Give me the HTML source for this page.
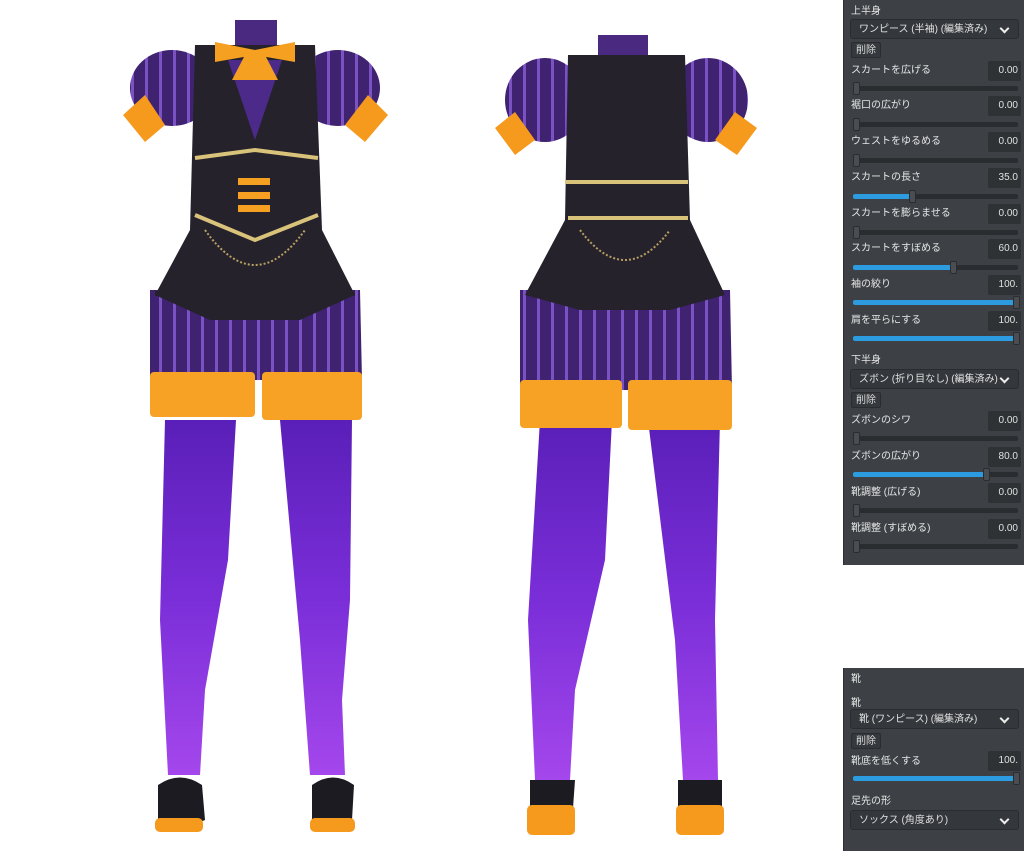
<!DOCTYPE html>
<html><head><meta charset="utf-8"><style>
body{margin:0;width:1024px;height:851px;background:#fff;position:relative;overflow:hidden;font-family:"Liberation Sans","Noto Sans CJK JP",sans-serif}
.p{position:absolute;left:843px;width:181px;background:#3d4145;border-left:1px solid #2c2f32}
.l{position:absolute;left:7px;font-size:10px;color:#e6e6e6;line-height:12px}
.dd{position:absolute;left:6px;width:169px;height:20px;background:#34373b;border:1px solid #2a2c2f;border-radius:3px;color:#e0e0e0;font-size:10px;line-height:20px;box-sizing:border-box;padding-left:8px}
.dd:after{content:"";position:absolute;right:10px;top:5px;width:5px;height:5px;border-right:2px solid #eee;border-bottom:2px solid #eee;transform:rotate(45deg)}
.b{position:absolute;left:7px;width:30px;height:16px;background:#35383c;border:1px solid #2a2c2f;border-radius:2px;color:#ddd;font-size:10px;line-height:16px;text-align:center;box-sizing:border-box}
.v{position:absolute;right:4px;width:33px;height:20px;background:#2f3235;border-radius:2px;color:#e0e0e0;font-size:10px;line-height:20px;text-align:right;padding-right:3px;box-sizing:border-box}
.t{position:absolute;left:9px;width:165px;height:5px;background:#2a2d30;border-radius:2px}
.f{position:absolute;left:0;top:0;height:5px;background:#2d9be0;border-radius:2px}
.k{position:absolute;top:-4px;width:7px;height:13px;background:#4a4e52;border:1px solid #2a2c2f;box-sizing:border-box;border-radius:2px}
</style></head><body>
<svg width="843" height="851" style="position:absolute;left:0;top:0">
<defs>
<linearGradient id="leg" x1="0" y1="0" x2="0" y2="1"><stop offset="0" stop-color="#5a1fb8"/><stop offset=".5" stop-color="#7a2ed8"/><stop offset="1" stop-color="#a447ec"/></linearGradient>
<pattern id="st" width="14" height="10" patternUnits="userSpaceOnUse"><rect width="14" height="10" fill="#3f2270"/><rect x="5" width="3" height="10" fill="#7a52c4"/></pattern>
</defs>
<!-- FRONT -->
<g>
<path d="M165 420 L236 420 L228 560 L205 690 L200 775 L168 775 L160 620 Z" fill="url(#leg)"/>
<path d="M280 420 L352 420 L350 600 L342 700 L345 775 L310 775 L300 640 Z" fill="url(#leg)"/>
<path d="M158 785 Q180 770 202 785 L205 820 Q180 832 158 822 Z" fill="#1c1b22"/><rect x="155" y="818" width="48" height="14" rx="5" fill="#f59a1d"/>
<path d="M312 785 Q333 770 354 785 L352 820 Q333 832 312 822 Z" fill="#1c1b22"/><rect x="310" y="818" width="45" height="14" rx="5" fill="#f59a1d"/>
<path d="M150 290 L360 290 L362 380 L150 380 Z" fill="url(#st)"/>
<rect x="150" y="372" width="105" height="45" rx="4" fill="#f7a125"/><rect x="262" y="372" width="100" height="48" rx="4" fill="#f7a125"/>
<ellipse cx="172" cy="88" rx="42" ry="38" fill="url(#st)"/><ellipse cx="338" cy="88" rx="42" ry="38" fill="url(#st)"/>
<path d="M123 115 L145 95 L165 125 L145 142 Z" fill="#f59a1d"/><path d="M345 125 L368 95 L388 115 L365 142 Z" fill="#f59a1d"/>
<rect x="235" y="20" width="42" height="30" fill="#4a2a80"/>
<path d="M195 45 L315 45 L322 230 L355 295 L300 320 L210 320 L155 295 L190 230 Z" fill="#25222c"/>
<path d="M155 290 Q170 305 185 295 Q200 315 215 303 Q230 322 255 310 Q280 322 295 303 Q310 315 325 295 Q340 305 355 290 L355 296 L155 296 Z" fill="#25222c"/>
<path d="M228 60 L255 140 L282 60 Z" fill="#4c2a8a"/>
<path d="M195 158 L255 150 L318 158 M195 215 L255 240 L318 215" stroke="#d9c37a" stroke-width="4" fill="none"/>
<path d="M205 230 Q255 300 305 230" stroke="#b8a060" stroke-width="2" stroke-dasharray="2 2" fill="none"/>
<rect x="238" y="178" width="32" height="7" fill="#f5a020"/><rect x="238" y="192" width="32" height="7" fill="#f5a020"/><rect x="238" y="205" width="32" height="7" fill="#f5a020"/>
<path d="M215 42 L255 50 L295 42 L295 62 L255 55 L215 62 Z" fill="#f5a020"/>
<path d="M245 55 L232 80 L278 80 L265 55 Z" fill="#f5a020"/>
</g>
<!-- BACK -->
<g>
<path d="M540 420 L612 420 L605 560 L575 690 L570 780 L535 780 L528 620 Z" fill="url(#leg)"/>
<path d="M648 420 L720 420 L715 620 L718 780 L683 780 L675 640 Z" fill="url(#leg)"/>
<path d="M530 780 L575 780 L573 808 L530 808 Z" fill="#1c1b22"/><rect x="527" y="805" width="48" height="30" rx="5" fill="#f59a1d"/>
<path d="M678 780 L722 780 L722 808 L678 808 Z" fill="#1c1b22"/><rect x="676" y="805" width="48" height="30" rx="5" fill="#f59a1d"/>
<path d="M520 290 L730 290 L732 390 L520 390 Z" fill="url(#st)"/>
<rect x="520" y="380" width="102" height="48" rx="4" fill="#f7a125"/><rect x="628" y="380" width="104" height="50" rx="4" fill="#f7a125"/>
<ellipse cx="545" cy="100" rx="40" ry="42" fill="url(#st)"/><ellipse cx="708" cy="100" rx="40" ry="42" fill="url(#st)"/>
<path d="M495 128 L515 112 L535 140 L515 155 Z" fill="#f59a1d"/><path d="M715 140 L735 112 L757 128 L737 155 Z" fill="#f59a1d"/>
<rect x="598" y="35" width="50" height="25" fill="#4a2a80"/>
<path d="M568 55 L685 55 L690 220 L725 295 L670 310 L580 310 L525 295 L565 220 Z" fill="#25222c"/>
<path d="M565 182 L688 182 M568 218 L688 218" stroke="#d9c37a" stroke-width="4"/>
<path d="M580 230 Q625 290 670 230" stroke="#b8a060" stroke-width="2" stroke-dasharray="2 2" fill="none"/>
</g>
</svg>
<div class="p" style="top:0;height:565px">
<div class="l" style="top:6px">上半身</div>
<div class="dd" style="top:19px">ワンピース (半袖) (編集済み)</div>
<div class="b" style="top:42px">削除</div>
<div class="l" style="top:65px">スカートを広げる</div><div class="v" style="top:61px">0.00</div><div class="t" style="top:86px"><div class="k" style="left:0"></div></div>
<div class="l" style="top:100px">裾口の広がり</div><div class="v" style="top:96px">0.00</div><div class="t" style="top:122px"><div class="k" style="left:0"></div></div>
<div class="l" style="top:136px">ウェストをゆるめる</div><div class="v" style="top:132px">0.00</div><div class="t" style="top:158px"><div class="k" style="left:0"></div></div>
<div class="l" style="top:172px">スカートの長さ</div><div class="v" style="top:168px">35.0</div><div class="t" style="top:194px"><div class="f" style="width:58px"></div><div class="k" style="left:56px"></div></div>
<div class="l" style="top:208px">スカートを膨らませる</div><div class="v" style="top:204px">0.00</div><div class="t" style="top:230px"><div class="k" style="left:0"></div></div>
<div class="l" style="top:243px">スカートをすぼめる</div><div class="v" style="top:239px">60.0</div><div class="t" style="top:265px"><div class="f" style="width:99px"></div><div class="k" style="left:97px"></div></div>
<div class="l" style="top:279px">袖の絞り</div><div class="v" style="top:275px">100.</div><div class="t" style="top:300px"><div class="f" style="width:165px"></div><div class="k" style="left:160px"></div></div>
<div class="l" style="top:315px">肩を平らにする</div><div class="v" style="top:311px">100.</div><div class="t" style="top:336px"><div class="f" style="width:165px"></div><div class="k" style="left:160px"></div></div>
<div class="l" style="top:355px">下半身</div>
<div class="dd" style="top:369px">ズボン (折り目なし) (編集済み)</div>
<div class="b" style="top:392px">削除</div>
<div class="l" style="top:415px">ズボンのシワ</div><div class="v" style="top:411px">0.00</div><div class="t" style="top:436px"><div class="k" style="left:0"></div></div>
<div class="l" style="top:451px">ズボンの広がり</div><div class="v" style="top:447px">80.0</div><div class="t" style="top:472px"><div class="f" style="width:132px"></div><div class="k" style="left:130px"></div></div>
<div class="l" style="top:487px">靴調整 (広げる)</div><div class="v" style="top:483px">0.00</div><div class="t" style="top:508px"><div class="k" style="left:0"></div></div>
<div class="l" style="top:523px">靴調整 (すぼめる)</div><div class="v" style="top:519px">0.00</div><div class="t" style="top:544px"><div class="k" style="left:0"></div></div>
</div>
<div class="p" style="top:668px;height:183px">
<div class="l" style="top:6px">靴</div>
<div class="l" style="top:30px">靴</div>
<div class="dd" style="top:41px">靴 (ワンピース) (編集済み)</div>
<div class="b" style="top:65px">削除</div>
<div class="l" style="top:88px">靴底を低くする</div><div class="v" style="top:83px">100.</div><div class="t" style="top:108px"><div class="f" style="width:165px"></div><div class="k" style="left:160px"></div></div>
<div class="l" style="top:128px">足先の形</div>
<div class="dd" style="top:142px">ソックス (角度あり)</div>
</div>
</body></html>
